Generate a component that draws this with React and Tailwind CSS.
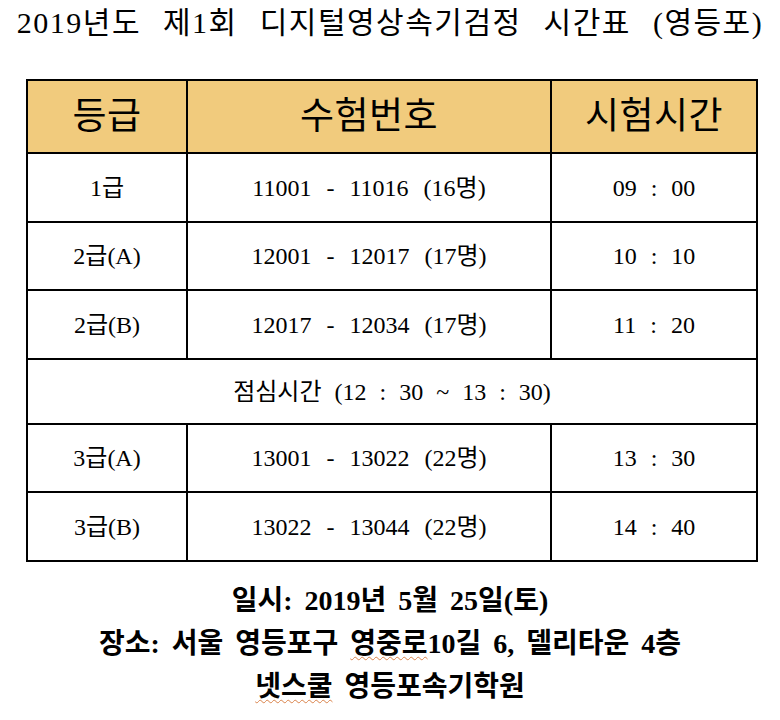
export default function App() {
  const font = { fontFamily: '"Liberation Serif", "Noto Sans CJK KR", serif' };
  const rows = [
    ["1급", "11001 - 11016 (16명)", "09 : 00", "h-[69px]"],
    ["2급(A)", "12001 - 12017 (17명)", "10 : 10", "h-[68px]"],
    ["2급(B)", "12017 - 12034 (17명)", "11 : 20", "h-[69px]"],
  ];
  const rows2 = [
    ["3급(A)", "13001 - 13022 (22명)", "13 : 30", "h-[68px]"],
    ["3급(B)", "13022 - 13044 (22명)", "14 : 40", "h-[67px]"],
  ];
  const Row = ({ r, last }) => (
    <div className={`flex ${r[3]} ${last ? "" : "border-b-2 border-black"}`}>
      <div className="w-[160px] flex items-center justify-center border-r-2 border-black text-[24px] whitespace-pre">{r[0]}</div>
      <div className="w-[364px] flex items-center justify-center border-r-2 border-black text-[24px] whitespace-pre [word-spacing:9px]">{r[1]}</div>
      <div className="flex-1 flex items-center justify-center text-[24px] whitespace-pre [word-spacing:8px]">{r[2]}</div>
    </div>
  );
  return (
    <div className="w-[780px] h-[720px] bg-white text-black" style={font}>
      <div className="h-[45px] flex items-center justify-center text-[30px] whitespace-pre tracking-[1.5px] [word-spacing:13px]">
        {"2019년도 제1회 디지털영상속기검정 시간표 (영등포)"}
      </div>
      <div className="ml-[26px] mt-[34px] w-[732px] border-2 border-black">
        <div className="flex h-[73px] bg-[#f1cb7d] border-b-2 border-black">
          <div className="w-[160px] flex items-center justify-center border-r-2 border-black text-[37px] tracking-[0.5px]">등급</div>
          <div className="w-[364px] flex items-center justify-center border-r-2 border-black text-[37px] tracking-[0.5px]">수험번호</div>
          <div className="flex-1 flex items-center justify-center text-[37px] tracking-[0.5px]">시험시간</div>
        </div>
        {rows.map((r, i) => <Row key={i} r={r} />)}
        <div className="h-[65px] flex items-center justify-center border-b-2 border-black text-[24px] whitespace-pre [word-spacing:7px]">
          {"점심시간 (12 : 30 ~ 13 : 30)"}
        </div>
        {rows2.map((r, i) => <Row key={i} r={r} last={i === 1} />)}
      </div>
      <div className="mt-[17px] flex flex-col items-center text-[28px] font-bold leading-[43px] whitespace-pre [word-spacing:5px]">
        <div>{"일시: 2019년 5월 25일(토)"}</div>
        <div>
          {"장소: 서울 영등포구 "}
          <span className="underline decoration-wavy decoration-[#d9824a] decoration-1 underline-offset-[3px]">영중로</span>
          {"10길 6, 델리타운 4층"}
        </div>
        <div>
          <span className="underline decoration-wavy decoration-[#d9824a] decoration-1 underline-offset-[3px]">넷스쿨</span>
          {" 영등포속기학원"}
        </div>
      </div>
    </div>
  );
}
